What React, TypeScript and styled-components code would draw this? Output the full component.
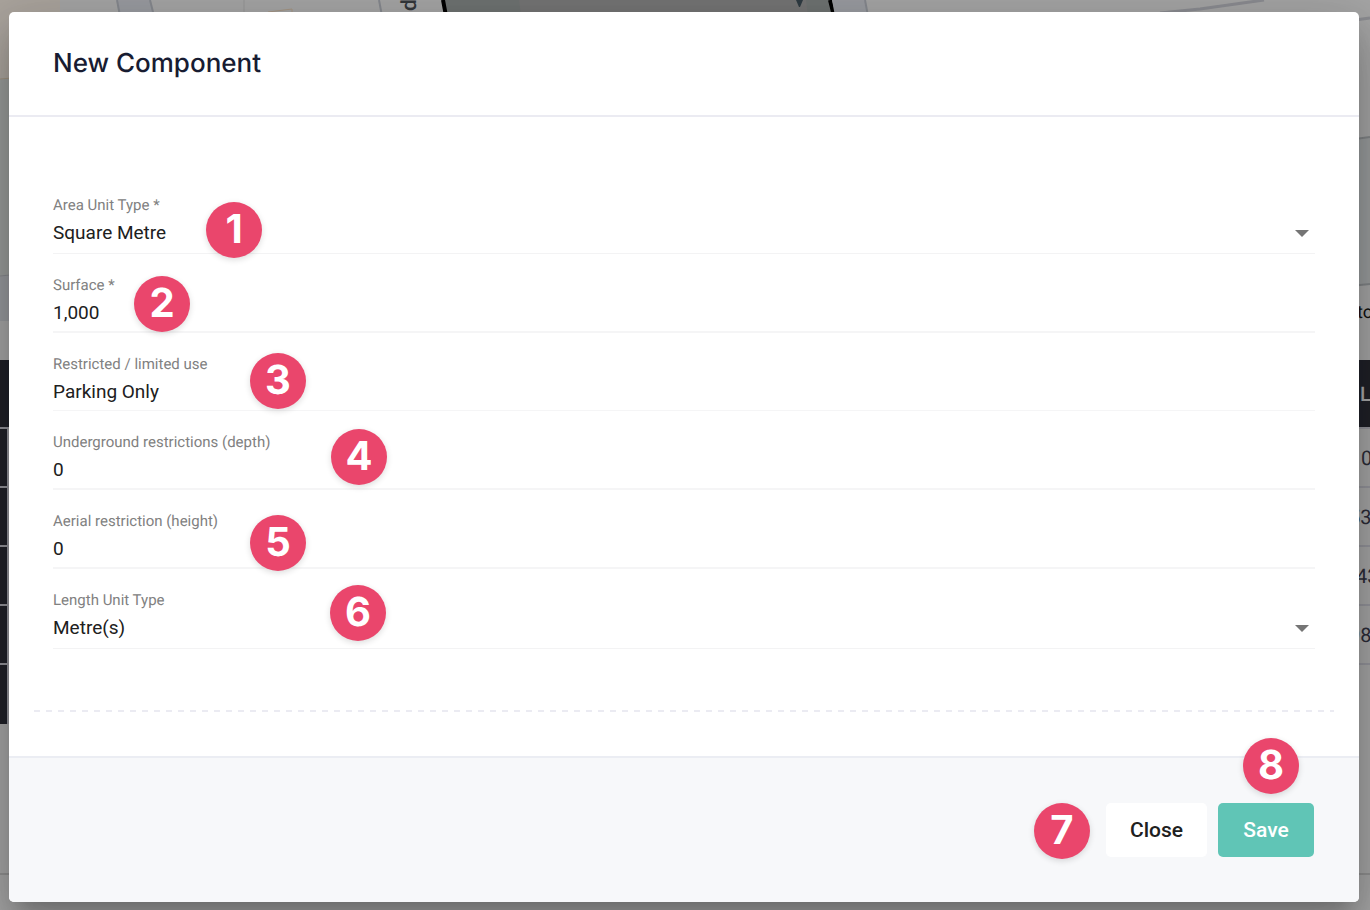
import React from "react";
import styled, { createGlobalStyle, css } from "styled-components";

const GlobalStyle = createGlobalStyle`
  *, *::before, *::after { box-sizing: border-box; }
  body {
    margin: 0;
    background: #a5a5a5;
    font-family: Roboto, "Liberation Sans", sans-serif;
    text-rendering: geometricPrecision;
  }
`;

const Page = styled.div`
  position: relative;
  display: flex;
  min-height: 100vh;
  overflow: hidden;
`;

/* Dimmed page behind the dialog */
const Backdrop = styled.div`
  position: absolute;
  inset: 0;
  display: flex;
  flex-direction: column;
  overflow: hidden;
`;

const MapArea = styled.div`
  display: flex;
  justify-content: space-between;
  flex: none;
  height: 360px;
  overflow: hidden;
  background: #a5a5a5;
`;

const MapDrawing = styled.svg`
  flex: none;
  height: 360px;
  font-family: Roboto, sans-serif;
`;

const PlotTable = styled.table`
  flex: none;
  width: 100%;
  table-layout: fixed;
  border-collapse: separate;
  border-spacing: 0;
  color: #2c2c38;
  font-size: 20px;
  line-height: 24px;
  text-align: left;

  th, td {
    height: 59px;
    padding: 0;
    border-bottom: 2px solid #93939a;
    font-weight: 400;
    white-space: nowrap;
  }
  thead th {
    height: 69px;
    background: #202128;
    color: #a8a8a8;
    font-weight: 500;
  }
  tbody th {
    background: #202128;
    border-right: 2px solid #93939a;
  }
  tbody tr:last-child > * {
    border-bottom: 0;
  }
  th:first-child {
    width: 9px;
  }
  th:last-child, td:last-child {
    width: 15px;
  }
`;

const Cell = styled.span<{ $shift?: number }>`
  display: block;
  margin-left: ${(p) => p.$shift ?? 0}px;
`;

const PageRule = styled.hr`
  flex: none;
  width: 100%;
  height: 2px;
  margin: 149px 0 0;
  border: 0;
  background: #8f8f8f;
`;

const Dialog = styled.form`
  position: relative;
  display: flex;
  flex: 1;
  flex-direction: column;
  min-width: 0;
  margin: 12px 11px 8px 9px;
  border-radius: 5px;
  background: #fff;
  box-shadow: 0 14px 19px -9px rgba(0, 0, 0, 0.2), 0 30px 48px 4px rgba(0, 0, 0, 0.14),
    0 11px 58px 10px rgba(0, 0, 0, 0.12);
`;

const Header = styled.header`
  padding: 32px 44px 31px;
  border-bottom: 2px solid #ebebf2;
`;

const Title = styled.h1`
  margin: 0;
  color: #181c32;
  font-family: Inter, sans-serif;
  font-size: 26px;
  font-weight: 500;
  line-height: 40px;
`;

const Body = styled.div`
  display: flex;
  flex: 1;
  flex-direction: column;
  padding: 78px 0 44px;
`;

const Fields = styled.div`
  display: flex;
  flex-direction: column;
  gap: 21px;
  padding: 0 44px;
`;

const Field = styled.div`
  position: relative;
  display: flex;
  flex-direction: column;
`;

const Label = styled.label`
  color: #818181;
  font-size: 15px;
  line-height: 20px;
`;

const control = css`
  width: 100%;
  margin: 0;
  border: 0;
  border-radius: 0;
  outline: 0;
  background: transparent;
  color: #202020;
  font-family: inherit;
  font-size: 19px;
  line-height: 24px;
`;

const TextInput = styled.input<{ $thin?: boolean }>`
  ${control}
  padding: 6px 0;
  border-bottom: ${(p) => (p.$thin ? 1 : 2)}px solid #f5f5f6;
`;

const SelectWrap = styled.div`
  display: grid;
  border-bottom: 1px solid #f3f3f4;

  > * {
    grid-area: 1 / 1;
  }
`;

const Select = styled.select`
  ${control}
  padding: 6px 24px 8px 0;
  appearance: none;
`;

const Arrow = styled.svg`
  justify-self: end;
  width: 14px;
  height: 7px;
  margin: 15px 6px 0 0;
  pointer-events: none;
`;

const Divider = styled.hr`
  width: auto;
  height: 2px;
  margin: auto 25px 0;
  border: 0;
  background: repeating-linear-gradient(to right, #ebebf2 0 6px, transparent 6px 12px);
`;

const Footer = styled.footer`
  display: flex;
  justify-content: flex-end;
  gap: 11px;
  padding: 45px;
  border-top: 2px solid #ebedf3;
  border-radius: 0 0 5px 5px;
  background: #f7f8fa;
`;

const Action = styled.div`
  position: relative;
`;

const Button = styled.button<{ $primary?: boolean }>`
  display: block;
  min-width: 96px;
  height: 54px;
  padding: 0 24px;
  border: 0;
  border-radius: 5px;
  background: ${(p) => (p.$primary ? "#60c5b6" : "#fff")};
  color: ${(p) => (p.$primary ? "#fff" : "#202020")};
  font-family: inherit;
  font-size: 21px;
  font-weight: 500;
  line-height: 24px;
`;

/* Numbered step marker that floats over a control */
const Marker = styled.span<{ $x: number; $y: number }>`
  position: absolute;
  left: ${(p) => p.$x}px;
  top: ${(p) => p.$y}px;
  width: 56px;
  height: 56px;
  border-radius: 50%;
  background: #ea466c;
  box-shadow: 0 2px 6px rgba(0, 0, 0, 0.14);
  color: #fff;
  font-family: Inter, sans-serif;
  font-size: 40px;
  font-weight: 700;
  line-height: 54px;
  text-align: center;
  pointer-events: none;
`;

type FieldSpec = {
  id: string;
  label: string;
  value: string;
  kind: "select" | "text" | "number";
  x: number;
  y: number;
};

const fields: FieldSpec[] = [
  { id: "area-unit", label: "Area Unit Type *", value: "Square Metre", kind: "select", x: 153, y: 7 },
  { id: "surface", label: "Surface *", value: "1,000", kind: "number", x: 81, y: 1 },
  { id: "restricted", label: "Restricted / limited use", value: "Parking Only", kind: "text", x: 197, y: -1 },
  { id: "underground", label: "Underground restrictions (depth)", value: "0", kind: "number", x: 278, y: -3 },
  { id: "aerial", label: "Aerial restriction (height)", value: "0", kind: "number", x: 197, y: 4 },
  { id: "length-unit", label: "Length Unit Type", value: "Metre(s)", kind: "select", x: 277, y: -5 },
];

const rows = [
  { text: "0", shift: 6 },
  { text: "53", shift: -6 },
  { text: "43", shift: 1 },
  { text: "98", shift: -6 },
  { text: "", shift: 0 },
];

function Background() {
  return (
    <Backdrop aria-hidden="true">
      <MapArea>
        <MapDrawing width="1000" viewBox="0 0 1000 360">
          <path d="M0 0H60V74L0 79Z" fill="#aaa49d" />
          <path d="M0 79L60 74V270L0 276Z" fill="#999c9a" />
          <path d="M0 79L60 74" stroke="#a1937f" strokeWidth="1" />
          <path d="M0 276L60 270V321H0Z" fill="#97999d" />
          <path d="M0 276L60 270" stroke="#85888b" strokeWidth="1" />
          <path d="M117 0H150L154 16H120Z" fill="#999ba0" />
          <path d="M117 0L120 16M150 0L154 16M379 0L382 16" stroke="#85888e" strokeWidth="2" fill="none" />
          <path d="M244 0V16" stroke="#959595" />
          <path d="M268 12L292 9V16" stroke="#a59582" fill="none" />
          <text transform="translate(416 11) rotate(-90)" fontSize="21" fontWeight="500" fill="#34373b">d</text>
          <path d="M443 0H829L834 16H445Z" fill="#747474" />
          <path d="M443 0H519L521 16H445ZM806 0H829L834 16H808Z" fill="#6e7271" />
          <path d="M443 0L446 16M830 0L834 16" stroke="#000" strokeWidth="4" />
          <path d="M796 0H803L800 7H799Z" fill="#2f3b42" />
          <path d="M832 0H865L868 16H835Z" fill="#999ba0" />
          <path d="M865 0L868 16" stroke="#85888e" strokeWidth="2" />
        </MapDrawing>
        <MapDrawing width="370" viewBox="0 0 370 360">
          <path d="M160 13L200 9L264 0" stroke="#8b8c91" strokeWidth="3" fill="none" />
          <path d="M340 22L370 18" stroke="#8b8c91" strokeWidth="3" />
          <path d="M340 141L370 137V284L340 287Z" fill="#999c9d" />
          <path d="M340 141L370 137M340 287L370 284" stroke="#818486" strokeWidth="2" />
          <text x="357" y="318" fontSize="18" fill="#111">to</text>
        </MapDrawing>
      </MapArea>
      <PlotTable>
        <thead>
          <tr>
            <th />
            <th />
            <th><Cell $shift={5}>L</Cell></th>
          </tr>
        </thead>
        <tbody>
          {rows.map((row, i) => (
            <tr key={i}>
              <th />
              <td />
              <td><Cell $shift={row.shift}>{row.text}</Cell></td>
            </tr>
          ))}
        </tbody>
      </PlotTable>
      <PageRule />
    </Backdrop>
  );
}

function FormField({ spec, step }: { spec: FieldSpec; step: number }) {
  return (
    <Field>
      <Label htmlFor={spec.id}>{spec.label}</Label>
      {spec.kind === "select" ? (
        <SelectWrap>
          <Select id={spec.id} defaultValue={spec.value}>
            <option>{spec.value}</option>
          </Select>
          <Arrow viewBox="0 0 14 7">
            <path d="M0 0H14L7 7Z" fill="#757575" />
          </Arrow>
        </SelectWrap>
      ) : (
        <TextInput id={spec.id} type="text" defaultValue={spec.value} $thin={spec.kind === "text"} />
      )}
      <Marker $x={spec.x} $y={spec.y}>{step}</Marker>
    </Field>
  );
}

export default function App() {
  return (
    <Page>
      <GlobalStyle />
      <Background />
      <Dialog role="dialog" aria-labelledby="dialog-title" onSubmit={(e) => e.preventDefault()}>
        <Header>
          <Title id="dialog-title">New Component</Title>
        </Header>
        <Body>
          <Fields>
            {fields.map((spec, i) => (
              <FormField key={spec.id} spec={spec} step={i + 1} />
            ))}
          </Fields>
          <Divider />
        </Body>
        <Footer>
          <Action>
            <Button type="button">Close</Button>
            <Marker $x={-72} $y={0}>7</Marker>
          </Action>
          <Action>
            <Button type="submit" $primary>Save</Button>
            <Marker $x={25} $y={-65}>8</Marker>
          </Action>
        </Footer>
      </Dialog>
    </Page>
  );
}
